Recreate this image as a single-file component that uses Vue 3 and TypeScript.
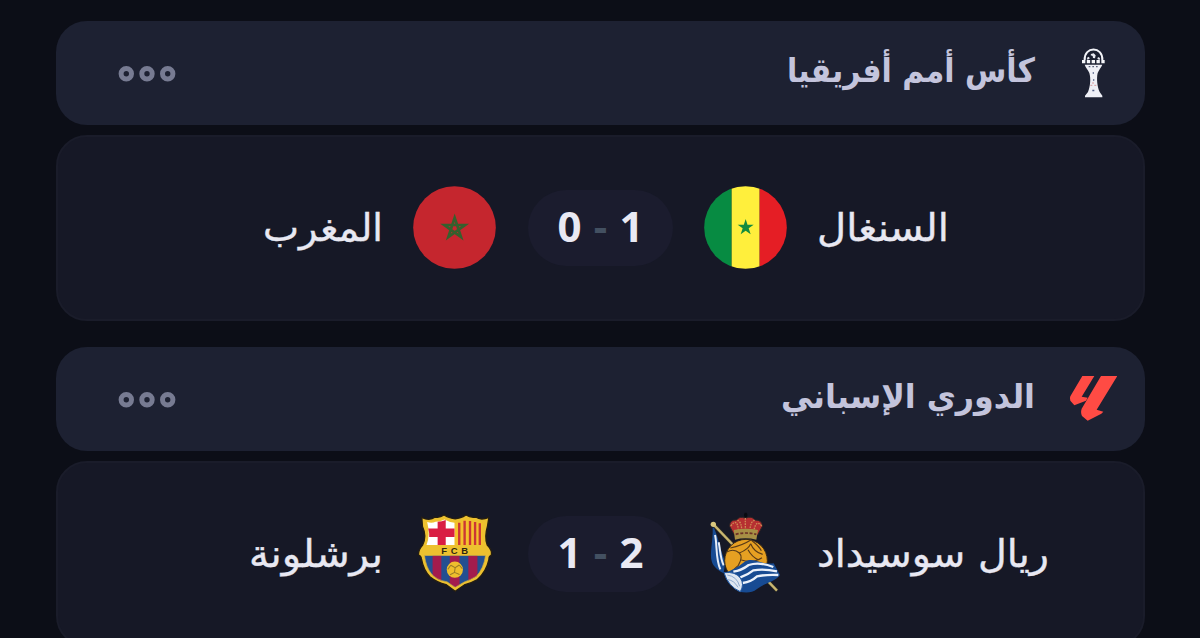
<script setup lang="ts">
interface Team { name: string; width: number; size: number; badge: string; goals: number }
interface League { id: string; title: string; width: number; home: Team; away: Team }

const leagues: League[] = [
  {
    id: 'afcon', title: 'كأس أمم أفريقيا', width: 248,
    home: { name: 'السنغال', width: 132, size: 38, badge: 'senegal', goals: 1 },
    away: { name: 'المغرب', width: 120, size: 38, badge: 'morocco', goals: 0 },
  },
  {
    id: 'laliga', title: 'الدوري الإسباني', width: 254,
    home: { name: 'ريال سوسيداد', width: 232, size: 38, badge: 'sociedad', goals: 2 },
    away: { name: 'برشلونة', width: 134, size: 38, badge: 'barcelona', goals: 1 },
  },
]
</script>

<template>
  <main class="page" dir="rtl">
    <section v-for="l in leagues" :key="l.id" class="league">
      <header class="head">
        <svg v-if="l.id === 'afcon'" class="logo" viewBox="87 115 144 150">
          <path d="M134 151C132 109 189 109 187 151" fill="#1b1f30" stroke="#f2f3f8" stroke-width="6" />
          <path d="M153 133l8-2 6 6-2 9-6-1-1-6-6-2zM141 144l6-3 2 6-7 3zM174 142l6 3-1 6-7-3z" fill="#e8e9f1" />
          <path d="M126 156H194" stroke="#f4f5f9" stroke-width="10" stroke-dasharray="10 4.5" />
          <path d="M134 165H187C184 173 176 181 173 190C169 207 172 232 179 247L187 258V263H135V258L144 247C151 229 153 207 148 190C145 181 137 174 134 165Z" fill="#eeeff6" />
          <path d="M146 171H176" stroke="#59607a" stroke-width="4" stroke-dasharray="5 6" />
          <path d="M158 188h4v4h-4zM159 209h4v4h-4zM157 240h6v5h-6z" fill="#536087" />
          <path d="M151 227h6M163 227h6M156 220h6" stroke="#d79a9d" stroke-width="3" />
        </svg>
        <svg v-else class="logo" viewBox="87 104 144 150">
          <path d="M127 110H163L125 172L143 175L138 184L103 198L91 184Q88 178 91 171Z" fill="#ff4b44" />
          <path d="M183 110H232L170 211L190 217L184 223L143 244L126 230Q121 220 125 208Z" fill="#ff4b44" />
        </svg>
        <svg class="label title" :width="l.width" height="60">
          <text :x="l.width" y="38.500" :textLength="l.width" lengthAdjust="spacingAndGlyphs">{{ l.title }}</text>
        </svg>
        <svg class="dots" width="58" height="18" viewBox="0 0 58 18">
          <circle cx="8.300" cy="9.700" r="5.200" /><circle cx="29" cy="9.700" r="5.200" /><circle cx="49.700" cy="9.700" r="5.200" />
        </svg>
      </header>

      <article class="match">
        <div v-for="(t, i) in [l.home, l.away]" :key="t.badge" class="team" :class="i ? 'away' : 'home'">
          <svg v-if="t.badge === 'senegal'" class="badge" viewBox="42 50 249 249">
            <clipPath id="senegal-disc"><circle cx="166.5" cy="174.5" r="124" /></clipPath>
            <g clip-path="url(#senegal-disc)">
              <path d="M42 50H125V299H42z" fill="#078b42" />
              <path d="M125 50H209V299H125z" fill="#ffef3c" />
              <path d="M209 50H292V299H209z" fill="#e51e25" />
            </g>
            <path d="M167 149L172.500 166.500H191L176 177L182 195L167 184L152 195L158 177L143 166.500H161.500Z" fill="#138b3e" />
          </svg>

          <svg v-else-if="t.badge === 'morocco'" class="badge" viewBox="489 50 249 249">
            <circle cx="613.5" cy="174.5" r="124" fill="#c5262e" />
            <path d="M614 145L633 203L583 167H645L595 203Z" fill="none" stroke="#35602d" stroke-width="8" />
          </svg>

          <svg v-else-if="t.badge === 'sociedad'" class="badge" viewBox="42 37 249 249">
            <path d="M70 74L261 273" stroke="#2a2923" stroke-width="12" />
            <path d="M70 74L261 273" stroke="#c9b670" stroke-width="7" />
            <circle cx="70" cy="74" r="8" fill="#d9c77d" />
            <path d="M68 84C70 125 57 160 66 188C72 204 86 213 101 221L106 185C92 157 88 122 72 84Z" fill="#174b93" />
            <path d="M75 106C82 132 76 177 91 209M86 128C91 149 90 174 101 197" stroke="#e6edf8" stroke-width="6" fill="none" />
            <circle cx="168" cy="183" r="64" fill="#e6a022" stroke="#352917" stroke-width="3" />
            <path d="M110 157Q132 145 148 160Q160 172 145 197L125 215M121 145Q155 138 184 120M148 160Q176 149 182 132M154 181Q188 192 216 174M182 132Q192 157 218 164M186 123Q208 140 214 153M174 150Q186 172 205 180" stroke="#5a3c18" stroke-width="3.500" fill="none" />
            <path d="M132 104L119 80Q119 59 140 61Q149 48 166 56Q185 47 195 61Q216 60 217 80L203 106Z" fill="#b62f31" stroke="#312625" stroke-width="3" />
            <path d="M122 79Q142 53 145 91M142 62Q155 66 155 92M166 55V94M194 62Q181 65 180 92M215 79Q199 58 192 91" stroke="#cf8a55" stroke-width="4" fill="none" stroke-dasharray="5 3" />
            <path d="M131 91Q168 83 204 91L199 120Q167 112 135 120Z" fill="#a78f45" />
            <path d="M137 104Q168 96 199 104" stroke="#6c3025" stroke-width="5" stroke-dasharray="9 5" fill="none" />
            <path d="M167 39V53M162 46H172" stroke="#080a10" stroke-width="7" />
            <path d="M102 219C125 214 145 202 163 187C188 170 211 196 251 191L270 226C253 248 224 249 201 268C185 281 166 279 147 276C125 263 107 245 102 219Z" fill="#174b93" />
            <path d="M130 216Q154 213 176 196Q207 185 250 202M151 233Q174 225 190 212Q223 207 261 215M158 250Q184 246 201 230Q231 224 265 226" stroke="#eaf1fb" stroke-width="7" fill="none" />
            <path d="M102 219Q137 215 151 235Q164 254 151 276Q115 261 102 219Z" fill="#dfe7f2" stroke="#2459a0" stroke-width="3" />
            <path d="M112 226Q141 230 149 260M114 240Q132 242 144 263" stroke="#8daad0" stroke-width="3" fill="none" />
          </svg>

          <svg v-else class="badge" viewBox="39 39 246 246">
            <clipPath id="fcb-field"><path d="M73 168H254Q248 208 226 230Q209 240 192 246L164 262L140 246Q107 240 93 221Q78 204 73 168Z" /></clipPath>
            <path d="M65 55Q88 67 105 54Q118 57 131 48Q149 59 164 59Q180 59 196 48Q210 57 225 54Q240 65 264 55L260 80Q250 113 259 137Q275 153 271 168Q264 169 264 180Q256 216 230 239Q211 250 193 254L164 274L137 254Q110 248 89 231Q70 211 64 178Q63 169 55 166Q55 151 67 138Q81 111 67 82Z" fill="#edc12f" stroke="#251e12" stroke-width="4" />
            <path d="M81 69Q95 73 106 68Q120 68 132 61Q147 69 162 71V137H79Q91 107 81 69Z" fill="#fff" />
            <path d="M112 68Q125 68 136 63V137H112ZM84 88H162V113H87Q88 101 84 88Z" fill="#d91d43" />
            <path d="M164 71Q182 70 196 61Q210 69 224 68Q236 73 249 69Q239 108 249 137H164Z" fill="#f5c12c" />
            <path d="M176 71V137M192 65V137M208 66V137M223 69V137M237 72V137" stroke="#cb3635" stroke-width="7" />
            <g clip-path="url(#fcb-field)">
              <path d="M70 165H260V270H70z" fill="#234f91" />
              <path d="M97 165H123V270H97zM148 165H177V270H148zM203 165H230V270H203z" fill="#a31c4d" />
            </g>
            <path d="M73 168H254Q248 208 226 230Q209 240 192 246L164 262L140 246Q107 240 93 221Q78 204 73 168Z" fill="none" stroke="#c0a64a" stroke-width="2" />
            <circle cx="163" cy="210" r="24" fill="#efbf2d" />
            <path d="M151 197L164 204L176 196M164 204L162 218L149 225M162 218L177 224M142 209L151 197M185 207L176 196" stroke="#9a7c25" stroke-width="3" fill="none" />
            <text class="crest" direction="ltr" x="123 151 182" y="164">FCB</text>
          </svg>

          <svg class="label name" :width="t.width" height="70">
            <text :x="t.width" y="47.500" :font-size="t.size" :textLength="t.width" lengthAdjust="spacingAndGlyphs">{{ t.name }}</text>
          </svg>
        </div>
        <div class="score" dir="ltr">
          <span class="goal">{{ l.away.goals }}</span><span class="dash">-</span><span class="goal">{{ l.home.goals }}</span>
        </div>
      </article>
    </section>
  </main>
</template>

<style>
body { background: #0c0e17; overflow: hidden; }
</style>

<style scoped>
.page {
  box-sizing: border-box;
  height: 638px;
  padding: 21px 55px 0 56px;
  overflow: hidden;
  background: #0c0e17;
  font-family: "DejaVu Sans", sans-serif;
}
.league { margin-bottom: 26.5px; }
.head {
  box-sizing: border-box;
  display: flex;
  align-items: center;
  height: 103.5px;
  padding: 1px 28px 0 62px;
  margin-bottom: 10px;
  border-radius: 31px;
  background: #1d2132;
}
.logo { width: 48px; height: 50px; flex: none; }
.label { display: block; flex: none; overflow: visible; direction: rtl; }
.title { margin-right: 34px; fill: #c3c4dc; font-size: 33.5px; font-weight: 700; }
.dots { margin-right: auto; fill: none; stroke: #777b92; stroke-width: 5; }
.match {
  box-sizing: border-box;
  display: grid;
  grid-template-columns: 1fr 145px 1fr;
  column-gap: 31px;
  align-items: center;
  height: 186px;
  border: 2px solid #1a1c2a;
  border-radius: 31px;
  background: #161826;
}
.team { display: flex; align-items: center; gap: 31px; grid-row: 1; }
.home { grid-column: 1; flex-direction: row-reverse; }
.away { grid-column: 3; padding-right: 1px; }
.badge { width: 83px; height: 83px; flex: none; }
.name { fill: #e8e8f2; stroke: #e8e8f2; stroke-width: 0.4; }
.home .name { margin-left: -1px; }
.away .name { margin-right: -1px; }
.crest { font: 700 28px "Liberation Sans", sans-serif; fill: #30270f; }
.score {
  grid-column: 2;
  grid-row: 1;
  display: flex;
  align-items: center;
  justify-content: center;
  height: 76px;
  border-radius: 38px;
  background: #1b1c2e;
  color: #e9e9f3;
  font: 700 42px/72px "Noto Sans", sans-serif;
}
.goal, .dash { height: 76px; text-align: center; }
.goal { width: 38px; }
.dash { width: 24px; color: #435061; }
</style>
